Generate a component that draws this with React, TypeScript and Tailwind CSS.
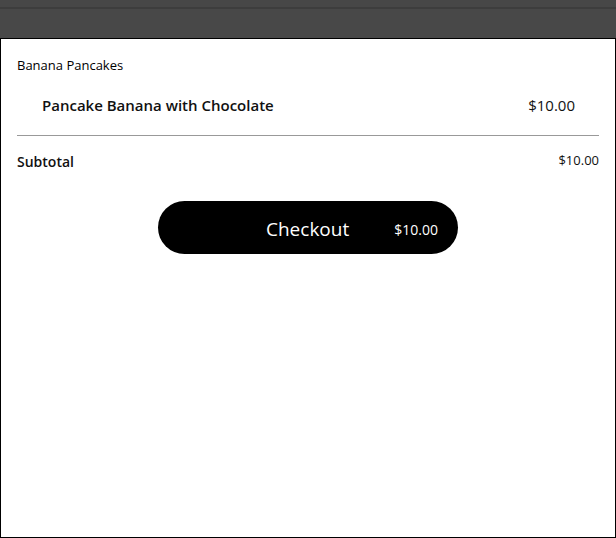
import React from 'react';

const items = [{ id: 1, name: 'Pancake Banana with Chocolate', price: 10 }];

export default function App() {
  const subtotal = items.reduce((sum, i) => sum + i.price, 0);

  return (
    <div className="w-[616px] h-[538px] flex flex-col bg-[#484848] font-['Open_Sans',sans-serif]">
      {/* Top bar */}
      <div className="h-[38px] shrink-0 flex flex-col">
        <div className="h-[7px] bg-[#474747]" />
        <div className="h-[2px] bg-[#3d3d3d]" />
        <div className="flex-1 bg-[#484848]" />
      </div>

      {/* Cart panel */}
      <div className="flex-1 bg-white border border-black px-4 pt-[17px]">
        <p className="text-[13px] leading-[18px] text-black">Banana Pancakes</p>

        {items.map((item) => (
          <div key={item.id} className="flex items-center justify-between pl-[25px] pr-[24px] mt-[19px] h-[24px]">
            <span className="text-[15px] font-semibold text-[#111]">{item.name}</span>
            <span className="text-[15px] text-[#111]">${item.price.toFixed(2)}</span>
          </div>
        ))}

        <div className="mt-[18px] h-px bg-[#999]" />

        <div className="flex items-center justify-between mt-[15px] h-[20px]">
          <span className="text-[14px] font-semibold text-[#111]">Subtotal</span>
          <span className="text-[13px] text-[#111]">${subtotal.toFixed(2)}</span>
        </div>

        <div className="flex justify-center mt-[30px]">
          <button className="w-[300px] h-[53px] rounded-full bg-black text-white flex items-center pl-[108px] pr-5 pt-[3px]">
            <span className="text-[19px]">Checkout</span>
            <span className="text-[14px] ml-auto">${subtotal.toFixed(2)}</span>
          </button>
        </div>
      </div>
    </div>
  );
}
